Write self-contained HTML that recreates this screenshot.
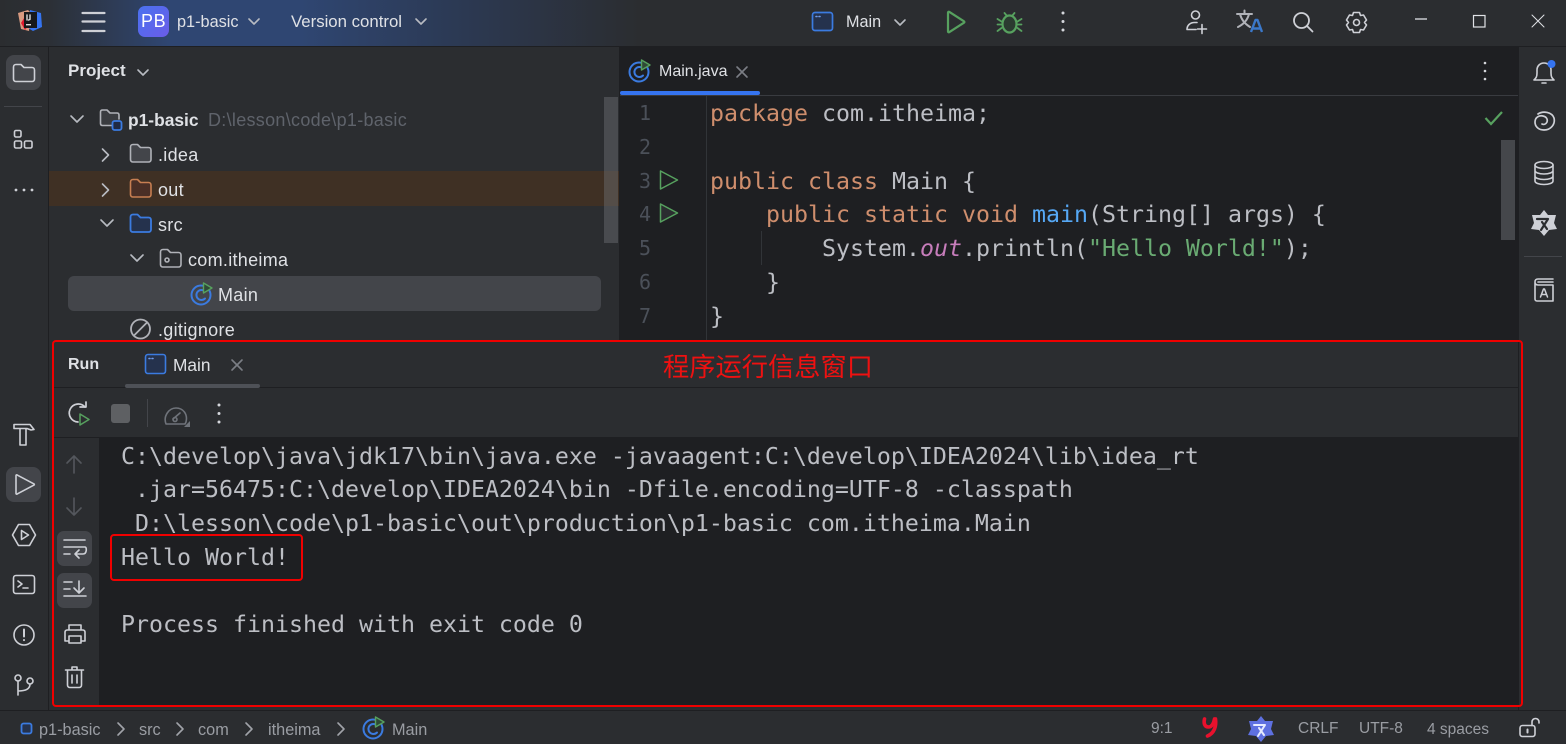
<!DOCTYPE html>
<html><head><meta charset="utf-8"><style>
html,body{margin:0;padding:0;background:#2b2d30}
#r{position:relative;width:1566px;height:744px;overflow:hidden;background:#2b2d30;font-family:"Liberation Sans","Noto Sans CJK SC",sans-serif;color:#dfe1e5}
#r div,#r svg{position:absolute}
.t{white-space:nowrap;font-size:17px;line-height:20px;height:20px}
.tr{font-size:18px;letter-spacing:.3px}
.m{white-space:pre;font-family:"DejaVu Sans Mono",monospace;font-size:23.25px;line-height:34px;height:34px;color:#bcbec4}
.k{color:#cf8e6d}.f{color:#56a8f5}.s{color:#6aab73}.o{color:#c77dbb;font-style:italic}
.ln{font-family:"DejaVu Sans Mono",monospace;font-size:20px;line-height:34px;color:#4b5059;width:30px;text-align:right;left:621px}
svg{fill:none;stroke:#ced0d6;stroke-width:1.6;stroke-linecap:round;stroke-linejoin:round}
.st{font-size:15.5px;color:#9a9da3;line-height:20px;height:20px;white-space:nowrap}
.sl{font-size:16.3px}
</style></head><body><div id="r">

<!-- Title bar -->
<div style="left:0;top:0;width:1566px;height:46px;background:linear-gradient(90deg,#2b2d30 0,#2c3036 50px,#2f4672 170px,#2f4672 300px,#2c3a55 450px,#2b2d30 640px)"></div>
<div style="left:0;top:46px;width:1566px;height:1px;background:#1e1f22"></div>
<svg style="left:16px;top:7px" width="28" height="28" viewBox="0 0 28 28"><path d="M14 3l11 3 1 14-9 4-5-3z" style="fill:#3574f0;stroke:none"/><path d="M2 6l10-3 3 3-2 18-8-2z" style="fill:#d89a80;stroke:none"/><path d="M5 16l5-8 3 10-4 5z" style="fill:#e0182d;stroke:none"/><rect x="8" y="5" width="13" height="16" style="fill:#17181a;stroke:none"/><rect x="10" y="17" width="5" height="1.4" style="fill:#ddd;stroke:none"/><path d="M11 8v5M14 8v4.500l-1.500 .5" style="stroke:#ddd;stroke-width:1.400"/></svg>
<svg style="left:81px;top:10px" width="26" height="24" viewBox="0 0 26 24"><path d="M1.500 3h22M1.500 11.500h22M1.500 21h22" style="stroke:#ced0d6;stroke-width:2.200"/></svg>
<div style="left:138px;top:6px;width:31px;height:31px;border-radius:7px;background:linear-gradient(135deg,#4a72f0,#6a5ce8)"></div>
<div class="t" style="left:141px;top:11px;font-size:18px;color:#fff;letter-spacing:.6px">PB</div>
<div class="t" style="left:177px;top:12px;font-size:16.300px;color:#dfe1e5">p1-basic</div>
<svg style="left:247px;top:17px" width="14" height="10" viewBox="0 0 14 10"><path d="M2 2l5 5 5-5" style="stroke:#b8bbc2"/></svg>
<div class="t" style="left:291px;top:12px;font-size:16.800px;color:#dfe1e5">Version control</div>
<svg style="left:414px;top:17px" width="14" height="10" viewBox="0 0 14 10"><path d="M2 2l5 5 5-5" style="stroke:#b8bbc2"/></svg>

<svg style="left:811px;top:11px" width="24" height="22" viewBox="0 0 24 22"><rect x="1.500" y="1.500" width="20" height="18" rx="2.500" style="fill:#25324d;stroke:#3b7be0;stroke-width:1.700"/><path d="M5 5.500h1M8 5.500h1" style="stroke:#6f9ae8"/></svg>
<div class="t" style="left:846px;top:12px;font-size:16.200px">Main</div>
<svg style="left:893px;top:18px" width="14" height="10" viewBox="0 0 14 10"><path d="M2 2l5 5 5-5" style="stroke:#b8bbc2"/></svg>
<svg style="left:945px;top:9px" width="22" height="26" viewBox="0 0 22 26"><path d="M3 3.500v19a.8.800 0 0 0 1.200.7L19 13.700a.8.800 0 0 0 0-1.400L4.200 2.800A.8.800 0 0 0 3 3.500z" style="stroke:#57a15f;stroke-width:2.200"/></svg>
<svg style="left:996px;top:9px" width="27" height="26" viewBox="0 0 27 26"><path d="M8.500 4l2.500 3M18.500 4L16 7M1.500 10l4 2.500M25.500 10l-4 2.500M1.500 22l4-3M25.500 22l-4-3M5 15.500H1.500M22 15.500h3.500" style="stroke:#57a15f;stroke-width:1.800"/><ellipse cx="13.500" cy="15" rx="7" ry="8.500" style="fill:#2b3a30;stroke:#57a15f;stroke-width:2.200"/></svg>
<svg style="left:1059px;top:10px" width="8" height="24" viewBox="0 0 8 24"><circle cx="4" cy="3" r="1.500" style="fill:#d5d7dc;stroke:none"/><circle cx="4" cy="11.500" r="1.500" style="fill:#d5d7dc;stroke:none"/><circle cx="4" cy="20" r="1.500" style="fill:#d5d7dc;stroke:none"/></svg>

<svg style="left:1185px;top:9px" width="24" height="26" viewBox="0 0 24 26"><circle cx="10.500" cy="6" r="4"/><path d="M2 20.500c0-4 3-7 7.500-7h2.500M2 20.500h9M17 15.500v9M12.500 20h9"/></svg>
<svg style="left:1236px;top:9px" width="27" height="24" viewBox="0 0 27 24"><path d="M1 5h15M8.500 1.500V5M4 5c1.500 6 5 10 10 13M13 5c-1.500 6-5 10-11 13" style="stroke:#b0b2b8;stroke-width:2"/><path d="M15 23l4.500-12h2l4.500 12M16.500 19.500h8" style="stroke:#3b78c9;stroke-width:2.400;stroke-linecap:butt"/></svg>
<svg style="left:1291px;top:10px" width="24" height="24" viewBox="0 0 24 24"><circle cx="10.500" cy="10.500" r="7.500" style="stroke-width:1.800"/><path d="M16 16l5.500 5.500" style="stroke-width:1.800"/></svg>
<svg style="left:1345px;top:10px" width="23" height="24" viewBox="0 0 23 24"><path d="M8.500 2.500h6l1 3 3-.5 3 5-2 2.500 2 2.500-3 5-3-.5-1 3h-6l-1-3-3 .5-3-5 2-2.500-2-2.500 3-5 3 .5z"/><circle cx="11.500" cy="12.500" r="3"/></svg>
<svg style="left:1414px;top:17px" width="14" height="4" viewBox="0 0 14 4"><path d="M1 2h12" style="stroke:#e0e2e6;stroke-linecap:butt;stroke-width:1.300"/></svg>
<svg style="left:1472px;top:14px" width="14" height="14" viewBox="0 0 14 14"><rect x="1.500" y="1.500" width="11.500" height="11.500" style="stroke:#e0e2e6;stroke-linejoin:miter;stroke-width:1.200"/></svg>
<svg style="left:1530px;top:13px" width="16" height="16" viewBox="0 0 16 16"><path d="M2 2l12 12M14 2L2 14" style="stroke:#e0e2e6;stroke-width:1"/></svg>

<!-- Left strip -->
<div style="left:48px;top:47px;width:1px;height:663px;background:#1e1f22"></div>
<div style="left:6px;top:55px;width:35px;height:35px;border-radius:8px;background:#43454a"></div>
<svg style="left:12px;top:62px" width="24" height="22" viewBox="0 0 24 22"><path d="M1.500 5c0-1.500 1-2.500 2.500-2.500h5l3 3h8c1.500 0 2.500 1 2.500 2.500v9c0 1.500-1 2.500-2.500 2.500H4c-1.500 0-2.500-1-2.500-2.500z"/></svg>
<div style="left:4px;top:106px;width:38px;height:1px;background:#43454a"></div>
<svg style="left:13px;top:129px" width="22" height="22" viewBox="0 0 22 22"><rect x="1.500" y="1.500" width="6.500" height="6.500" rx="1.500"/><rect x="1.500" y="12" width="7" height="7" rx="1.500"/><rect x="11.500" y="12" width="7.500" height="7" rx="1.500"/></svg>
<svg style="left:13px;top:187px" width="22" height="6" viewBox="0 0 22 6"><circle cx="3" cy="3" r="1.400" style="fill:#ced0d6;stroke:none"/><circle cx="11" cy="3" r="1.400" style="fill:#ced0d6;stroke:none"/><circle cx="19" cy="3" r="1.400" style="fill:#ced0d6;stroke:none"/></svg>

<svg style="left:12px;top:422px" width="24" height="26" viewBox="0 0 24 26"><path d="M2 2.500h16l4 5-3 .5-4-1.500H2zM8 7v16h6V7"/></svg>
<div style="left:6px;top:467px;width:35px;height:35px;border-radius:8px;background:#43454a"></div>
<svg style="left:13px;top:473px" width="24" height="24" viewBox="0 0 24 24"><path d="M3 2.500v18a.7.700 0 0 0 1 .6l17-9a.7.700 0 0 0 0-1.200l-17-9a.7.700 0 0 0-1 .6z"/></svg>
<svg style="left:11px;top:522px" width="26" height="26" viewBox="0 0 26 26"><path d="M7.500 2.500h11L24.500 13l-6 10.500h-11L1.500 13z"/><path d="M10.500 8.500v9l7-4.500z"/></svg>
<svg style="left:12px;top:574px" width="24" height="22" viewBox="0 0 24 22"><rect x="1.500" y="1.500" width="21" height="18" rx="2.500"/><path d="M6 7l4 3-4 3M11 14h5"/></svg>
<svg style="left:12px;top:623px" width="24" height="24" viewBox="0 0 24 24"><circle cx="12" cy="12" r="10"/><path d="M12 6.500v7M12 17v.1" style="stroke-width:2"/></svg>
<svg style="left:13px;top:673px" width="22" height="24" viewBox="0 0 22 24"><circle cx="5" cy="5" r="3"/><circle cx="17" cy="8" r="3"/><path d="M5 8v14M5 18c6 0 12-1 12-7"/></svg>

<!-- Project panel -->
<div class="t" style="left:68px;top:61px;font-weight:bold;font-size:17px">Project</div>
<svg style="left:136px;top:68px" width="14" height="10" viewBox="0 0 14 10"><path d="M2 2l5 5 5-5" style="stroke:#b8bbc2"/></svg>

<svg style="left:69px;top:114px" width="16" height="11" viewBox="0 0 16 11"><path d="M2 2l6 6 6-6" style="stroke:#b8bbc2"/></svg>
<svg style="left:99px;top:108px" width="26" height="24" viewBox="0 0 26 24"><path d="M14 17.500H3.500c-1.200 0-2-.8-2-2V4c0-1.300.8-2 2-2h4.500l3 3h7c1.300 0 2 .8 2 2v4" style="stroke:#b0b2b8;fill:#3a3c40"/><rect x="13.500" y="13" width="9" height="9" rx="2" style="stroke:#3b7be0;stroke-width:1.800;fill:#1f2a44"/></svg>
<div class="t" style="left:128px;top:110px;font-weight:bold;font-size:17.400px">p1-basic</div>
<div class="t tr" style="left:208px;top:110px;color:#5f636b">D:\lesson\code\p1-basic</div>

<svg style="left:100px;top:147px" width="12" height="16" viewBox="0 0 12 16"><path d="M2.500 2l6 6-6 6" style="stroke:#b8bbc2"/></svg>
<svg style="left:129px;top:143px" width="24" height="21" viewBox="0 0 24 21"><path d="M1.500 4c0-1.500 1-2.500 2.500-2.500h4.500l3 3h8c1.500 0 2.500 1 2.500 2.500v9.500c0 1.500-1 2.500-2.500 2.500H4c-1.500 0-2.500-1-2.500-2.500z" style="stroke:#b0b2b8;fill:#43454a"/></svg>
<div class="t tr" style="left:158px;top:145px">.idea</div>

<div style="left:49px;top:171px;width:570px;height:35px;background:#3f3024"></div>
<svg style="left:100px;top:182px" width="12" height="16" viewBox="0 0 12 16"><path d="M2.500 2l6 6-6 6" style="stroke:#b8bbc2"/></svg>
<svg style="left:129px;top:178px" width="24" height="21" viewBox="0 0 24 21"><path d="M1.500 4c0-1.500 1-2.500 2.500-2.500h4.500l3 3h8c1.500 0 2.500 1 2.500 2.500v9.500c0 1.500-1 2.500-2.500 2.500H4c-1.500 0-2.500-1-2.500-2.500z" style="stroke:#c77f52;fill:#4a2f26"/></svg>
<div class="t tr" style="left:158px;top:180px">out</div>

<svg style="left:99px;top:218px" width="16" height="11" viewBox="0 0 16 11"><path d="M2 2l6 6 6-6" style="stroke:#b8bbc2"/></svg>
<svg style="left:129px;top:213px" width="24" height="21" viewBox="0 0 24 21"><path d="M1.500 4c0-1.500 1-2.500 2.500-2.500h4.500l3 3h8c1.500 0 2.500 1 2.500 2.500v9.500c0 1.500-1 2.500-2.500 2.500H4c-1.500 0-2.500-1-2.500-2.500z" style="stroke:#3b7be0;fill:#25324d;stroke-width:1.800"/></svg>
<div class="t tr" style="left:158px;top:215px">src</div>

<svg style="left:129px;top:253px" width="16" height="11" viewBox="0 0 16 11"><path d="M2 2l6 6 6-6" style="stroke:#b8bbc2"/></svg>
<svg style="left:159px;top:248px" width="24" height="21" viewBox="0 0 24 21"><path d="M1.500 4c0-1.500 1-2.500 2.500-2.500h4.500l3 3h8c1.500 0 2.500 1 2.500 2.500v9.500c0 1.500-1 2.500-2.500 2.500H4c-1.500 0-2.500-1-2.500-2.500z" style="stroke:#b0b2b8"/><circle cx="8" cy="12" r="2" style="stroke:#b0b2b8"/></svg>
<div class="t tr" style="left:188px;top:250px">com.itheima</div>

<div style="left:68px;top:276px;width:533px;height:35px;border-radius:6px;background:#43454a"></div>
<svg style="left:189px;top:281px" width="26" height="26" viewBox="0 0 26 26"><circle cx="12" cy="14" r="9.500" style="stroke:#3b7be0;stroke-width:2"/><path d="M16 17.500a5 5 0 1 1 0-7" style="stroke:#3b7be0;stroke-width:2"/><path d="M14.500 2l8.500 5-8.500 5z" style="stroke:#57a15f;fill:#2f4a36;stroke-width:1.400"/></svg>
<div class="t tr" style="left:218px;top:285px">Main</div>

<svg style="left:129px;top:317px" width="24" height="24" viewBox="0 0 24 24"><circle cx="11.500" cy="12" r="9.500" style="stroke:#b0b2b8;stroke-width:1.800"/><path d="M5 18.500L18 5.500" style="stroke:#b0b2b8;stroke-width:1.800"/></svg>
<div class="t tr" style="left:158px;top:320px">.gitignore</div>
<div style="left:604px;top:97px;width:14px;height:146px;background:rgba(110,112,118,.45)"></div>

<!-- Editor -->
<div style="left:619px;top:47px;width:900px;height:295px;background:#1e1f22"></div>
<div style="left:620px;top:95px;width:898px;height:1px;background:#393b40"></div>
<div style="left:620px;top:91px;width:140px;height:4px;border-radius:2px;background:#3574f0"></div>
<svg style="left:627px;top:58px" width="26" height="26" viewBox="0 0 26 26"><circle cx="12" cy="14" r="9.500" style="stroke:#3b7be0;stroke-width:2"/><path d="M16 17.500a5 5 0 1 1 0-7" style="stroke:#3b7be0;stroke-width:2"/><path d="M14.500 2l8.500 5-8.500 5z" style="stroke:#57a15f;fill:#2f4a36;stroke-width:1.400"/></svg>
<div class="t" style="left:659px;top:62px;font-size:16px">Main.java</div>
<svg style="left:735px;top:65px" width="14" height="14" viewBox="0 0 14 14"><path d="M2 2l10 10M12 2L2 12" style="stroke:#7b7e85"/></svg>
<svg style="left:1481px;top:59px" width="8" height="24" viewBox="0 0 8 24"><circle cx="4" cy="4" r="1.300" style="fill:#d5d7dc;stroke:none"/><circle cx="4" cy="12" r="1.300" style="fill:#d5d7dc;stroke:none"/><circle cx="4" cy="20" r="1.300" style="fill:#d5d7dc;stroke:none"/></svg>

<div style="left:706px;top:96px;width:1px;height:245px;background:#313438"></div>
<div style="left:761px;top:231px;width:1px;height:34px;background:#313438"></div>

<div class="ln" style="top:96px">1</div>
<div class="ln" style="top:130px">2</div>
<div class="ln" style="top:164px">3</div>
<div class="ln" style="top:197px">4</div>
<div class="ln" style="top:231px">5</div>
<div class="ln" style="top:265px">6</div>
<div class="ln" style="top:299px">7</div>
<svg style="left:658px;top:168px" width="22" height="24" viewBox="0 0 22 24"><path d="M2.500 3v18l17-9z" style="stroke:#57a15f;stroke-width:1.500"/></svg>
<svg style="left:658px;top:201px" width="22" height="24" viewBox="0 0 22 24"><path d="M2.500 3v18l17-9z" style="stroke:#57a15f;stroke-width:1.500;fill:#2b2d30"/></svg>

<div class="m" style="left:710px;top:97px"><span class="k">package</span> com.itheima;</div>
<div class="m" style="left:710px;top:165px"><span class="k">public class</span> Main {</div>
<div class="m" style="left:710px;top:198px">    <span class="k">public static void</span> <span class="f">main</span>(String[] args) {</div>
<div class="m" style="left:710px;top:232px">        System.<span class="o">out</span>.println(<span class="s">"Hello World!"</span>);</div>
<div class="m" style="left:710px;top:266px">    }</div>
<div class="m" style="left:710px;top:300px">}</div>

<svg style="left:1483px;top:109px" width="22" height="18" viewBox="0 0 22 18"><path d="M2.500 9l5.500 6L19 3" style="stroke:#57a15f;stroke-width:2.200;stroke-linecap:butt;stroke-linejoin:miter"/></svg>
<div style="left:1501px;top:140px;width:14px;height:100px;background:#45474b"></div>

<!-- Right strip -->
<div style="left:1518px;top:47px;width:1px;height:663px;background:#1e1f22"></div>
<svg style="left:1531px;top:58px" width="28" height="30" viewBox="0 0 28 30"><path d="M3 22c2-2 3-3 3-7v-3c0-4 3-7 7-7s7 3 7 7v3c0 4 1 5 3 7zM11 25h4"/><circle cx="20.500" cy="6" r="4" style="fill:#3574f0;stroke:none"/></svg>
<svg style="left:1532px;top:109px" width="24" height="26" viewBox="0 0 24 26"><path d="M6 5c5-3.500 14-2 16 4 1.500 6-3 12-10 12-5 0-9-3-9-8 0-4.500 4-7 8-6 3 .5 5 3 4 6-1 2-3 3-5 2" style="stroke-width:1.700"/></svg>
<svg style="left:1533px;top:160px" width="22" height="26" viewBox="0 0 22 26"><ellipse cx="11" cy="5" rx="9" ry="3.500"/><path d="M2 5v16c0 2 4 3.500 9 3.500s9-1.500 9-3.500V5M2 10.500c0 2 4 3.500 9 3.500s9-1.500 9-3.500M2 16c0 2 4 3.500 9 3.500s9-1.500 9-3.500"/></svg>
<svg style="left:1530px;top:209px" width="28" height="28" viewBox="0 0 28 28"><path d="M14 1l4 5 8 0-2 8 3 6-8 1-5 6-5-6-8-1 3-6-2-8 8 0z" style="fill:#ced0d6;stroke:none"/><path d="M7 10h11M18 10l-7 11M12 13l5 7" style="stroke:#2b2d30;stroke-width:2.200"/></svg>
<div style="left:1524px;top:256px;width:38px;height:1px;background:#43454a"></div>
<svg style="left:1532px;top:277px" width="24" height="26" viewBox="0 0 24 26"><path d="M3 5c0-2 1-3 3-3h15M3 5c0 2 1 3 3 3h15v16H5c-1.300 0-2-.7-2-2zM6 5h15"/><path d="M8.500 20l3-8h1l3 8M9.500 17.500h5" style="stroke-width:1.500"/></svg>

<!-- Run panel -->
<div style="left:52px;top:340px;width:1466px;height:367px;background:#2b2d30"></div>
<div style="left:52px;top:387px;width:1466px;height:1px;background:#1e1f22"></div>
<div style="left:52px;top:437px;width:1466px;height:1px;background:#1e1f22"></div>
<div style="left:99px;top:438px;width:1419px;height:269px;background:#1e1f22"></div>
<div class="t" style="left:68px;top:355px;font-weight:bold;font-size:16px">Run</div>
<svg style="left:144px;top:353px" width="24" height="22" viewBox="0 0 24 22"><rect x="1.500" y="1.500" width="20" height="19" rx="2.500" style="fill:#25324d;stroke:#3b7be0;stroke-width:1.600"/><path d="M5 5.500h1M8 5.500h1" style="stroke:#6f9ae8"/></svg>
<div class="t" style="left:173px;top:355px;font-size:17.300px">Main</div>
<svg style="left:230px;top:358px" width="14" height="14" viewBox="0 0 14 14"><path d="M2 2l10 10M12 2L2 12" style="stroke:#7b7e85"/></svg>
<div style="left:125px;top:384px;width:135px;height:4px;border-radius:2px;background:#4e5157"></div>
<div style="left:663px;top:353px;font-size:26.250px;line-height:28px;color:#ee1111;white-space:nowrap">程序运行信息窗口</div>

<svg style="left:66px;top:401px" width="26" height="26" viewBox="0 0 26 26"><path d="M19 6a9 9 0 1 0-7 15" style="stroke-width:1.700"/><path d="M14 6h6V1" style="stroke-width:1.700"/><path d="M14 13v11l9-5.500z" style="stroke:#57a15f;stroke-width:1.500"/></svg>
<div style="left:111px;top:404px;width:19px;height:19px;border-radius:3px;background:#5e6063"></div>
<div style="left:147px;top:399px;width:1px;height:28px;background:#43454a"></div>
<svg style="left:163px;top:404px" width="28" height="24" viewBox="0 0 28 24"><path d="M3 20c-3-8 3-16 10-16s12 6 10 14l-1 2H3zM10 15l7-6" style="stroke:#6f737a"/><circle cx="12" cy="15.500" r="2" style="stroke:#6f737a"/><path d="M21 23l6 0 0-6z" style="stroke:none;fill:#6f737a"/></svg>
<svg style="left:215px;top:402px" width="8" height="24" viewBox="0 0 8 24"><circle cx="4" cy="3" r="1.500" style="fill:#d5d7dc;stroke:none"/><circle cx="4" cy="11.500" r="1.500" style="fill:#d5d7dc;stroke:none"/><circle cx="4" cy="20" r="1.500" style="fill:#d5d7dc;stroke:none"/></svg>

<svg style="left:64px;top:453px" width="20" height="22" viewBox="0 0 20 22"><path d="M10 20V3M3 10l7-7 7 7" style="stroke:#54575d"/></svg>
<svg style="left:64px;top:496px" width="20" height="22" viewBox="0 0 20 22"><path d="M10 2v17M3 12l7 7 7-7" style="stroke:#54575d"/></svg>
<div style="left:57px;top:531px;width:35px;height:35px;border-radius:7px;background:#43454a"></div>
<svg style="left:62px;top:538px" width="26" height="22" viewBox="0 0 26 22"><path d="M2 2h21M2 9h21c2 0 2 7-2 7h-8M17 12l-4 4 4 4M2 16h6"/></svg>
<div style="left:57px;top:573px;width:35px;height:35px;border-radius:7px;background:#43454a"></div>
<svg style="left:62px;top:580px" width="26" height="22" viewBox="0 0 26 22"><path d="M2 2h8M2 9h6M2 16h22M17 1v11M12 8l5 5 5-5"/></svg>
<svg style="left:63px;top:623px" width="24" height="22" viewBox="0 0 24 22"><path d="M6 7V2h12v5M6 18H2V9c0-1 1-2 2-2h16c1 0 2 1 2 2v9h-4M6 13h12v7H6z"/></svg>
<svg style="left:64px;top:665px" width="22" height="24" viewBox="0 0 22 24"><path d="M1.500 5h18M8 5V2h5v3M3.500 5v15c0 1.500 1 2.500 2.500 2.500h9c1.500 0 2.500-1 2.500-2.500V5M8 10v8M13 10v8"/></svg>

<div class="m" style="left:121px;top:440px">C:\develop\java\jdk17\bin\java.exe -javaagent:C:\develop\IDEA2024\lib\idea_rt</div>
<div class="m" style="left:121px;top:473px"> .jar=56475:C:\develop\IDEA2024\bin -Dfile.encoding=UTF-8 -classpath</div>
<div class="m" style="left:121px;top:507px"> D:\lesson\code\p1-basic\out\production\p1-basic com.itheima.Main</div>
<div class="m" style="left:121px;top:541px">Hello World!</div>
<div class="m" style="left:121px;top:608px">Process finished with exit code 0</div>

<div style="left:110px;top:534px;width:189px;height:43px;border:2px solid #f00000;border-radius:4px"></div>
<div style="left:52px;top:340px;width:1467px;height:363px;border:2px solid #f00000;border-radius:4px"></div>

<!-- Status bar -->
<div style="left:0;top:710px;width:1566px;height:1px;background:#1e1f22"></div>
<svg style="left:20px;top:722px" width="14" height="14" viewBox="0 0 14 14"><rect x="1.500" y="1.500" width="10" height="10" rx="2" style="stroke:#3b7be0;stroke-width:1.800;fill:#25324d"/></svg>
<div class="st sl" style="left:39px;top:720px">p1-basic</div>
<svg style="left:115px;top:721px" width="12" height="16" viewBox="0 0 12 16"><path d="M3 2l6 6-6 6" style="stroke:#a0a3a9"/></svg>
<div class="st sl" style="left:139px;top:720px">src</div>
<svg style="left:174px;top:721px" width="12" height="16" viewBox="0 0 12 16"><path d="M3 2l6 6-6 6" style="stroke:#a0a3a9"/></svg>
<div class="st sl" style="left:198px;top:720px">com</div>
<svg style="left:243px;top:721px" width="12" height="16" viewBox="0 0 12 16"><path d="M3 2l6 6-6 6" style="stroke:#a0a3a9"/></svg>
<div class="st sl" style="left:268px;top:720px">itheima</div>
<svg style="left:335px;top:721px" width="12" height="16" viewBox="0 0 12 16"><path d="M3 2l6 6-6 6" style="stroke:#a0a3a9"/></svg>
<svg style="left:361px;top:715px" width="26" height="26" viewBox="0 0 26 26"><circle cx="12" cy="14" r="9.500" style="stroke:#3b7be0;stroke-width:2"/><path d="M16 17.500a5 5 0 1 1 0-7" style="stroke:#3b7be0;stroke-width:2"/><path d="M14.500 2l8.500 5-8.500 5z" style="stroke:#57a15f;fill:#2f4a36;stroke-width:1.400"/></svg>
<div class="st sl" style="left:392px;top:720px">Main</div>

<div class="st" style="left:1151px;top:719px">9:1</div>
<svg style="left:1201px;top:716px" width="20" height="24" viewBox="0 0 20 24"><path d="M3.500 3c-1 4 0 8 4 8 3 0 5-3 6-8M14.500 3c1 7-1 14-8 17" style="stroke:#e8112d;stroke-width:3.600"/></svg>
<svg style="left:1247px;top:715px" width="28" height="28" viewBox="0 0 28 28"><path d="M14 1l4 5 8 0-2 8 3 6-8 1-5 6-5-6-8-1 3-6-2-8 8 0z" style="fill:#5e70e0;stroke:none"/><path d="M7 10h11M18 10l-7 11M12 13l5 7" style="stroke:#e6ebff;stroke-width:2"/></svg>
<div class="st" style="left:1298px;top:719px">CRLF</div>
<div class="st" style="left:1359px;top:719px">UTF-8</div>
<div class="st" style="left:1427px;top:720px">4 spaces</div>
<svg style="left:1518px;top:717px" width="24" height="22" viewBox="0 0 24 22"><rect x="2" y="8.500" width="15" height="11" rx="2.500"/><path d="M9.500 12.500v3" style="stroke-width:2"/><path d="M14 8.500V5c0-2 1.500-3.500 3.500-3.500S21 3 21 5v1"/></svg>
</div></body></html>
